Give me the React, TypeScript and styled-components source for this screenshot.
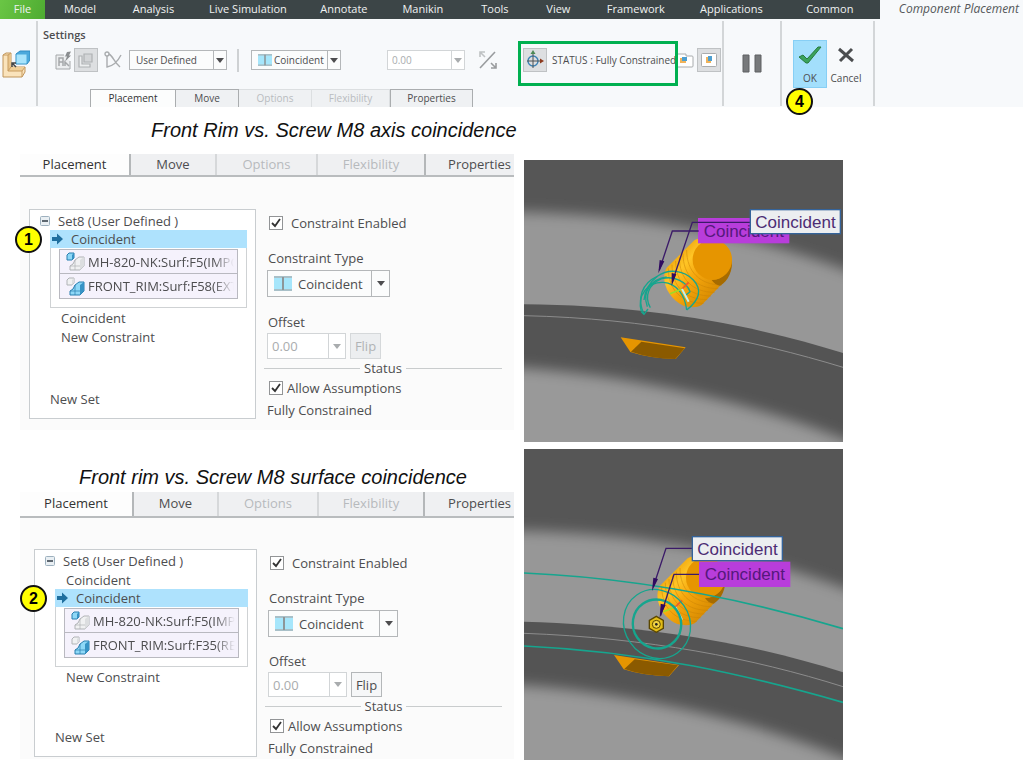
import React, { useId } from "react";
import styled, { createGlobalStyle, css } from "styled-components";

const ui = `"Open Sans", "Noto Sans", sans-serif`;
const arial = `"Liberation Sans", Arial, sans-serif`;

const GlobalStyle = createGlobalStyle`
  *, *::before, *::after { box-sizing: border-box; }
  body { margin: 0; background: #fff; font-family: ${ui}; color: #4d4d4f; }
  button, input, select { font: inherit; color: inherit; margin: 0; }
  button { padding: 0; border: 0; background: none; }
`;

/* ---------- menu bar ---------- */

const MenuBar = styled.nav`
  display: flex;
  height: 19px;
  background: #f7f9fb;
  font-size: 11px;
  line-height: 18px;
`;

const MenuItems = styled.div`
  display: flex;
  flex: 0 0 86%;
  background: #3c4547;
`;

const MenuLink = styled.a<{ $grow: number; $file?: boolean }>`
  flex: ${(p) => p.$grow} 1 0;
  text-align: center;
  white-space: nowrap;
  text-decoration: none;
  color: #f0f2f2;
  ${(p) => p.$file && css`background: linear-gradient(110deg, #6ac645, #4eab31);`}
`;

const ContextTitle = styled.div`
  flex: 1;
  text-align: right;
  padding-right: 4px;
  font-size: 12px;
  font-style: italic;
  white-space: nowrap;
  color: #55585a;
`;

/* ---------- ribbon ---------- */

const Ribbon = styled.header`
  display: flex;
  height: 88px;
  background: #f7f9fb;
  font-size: 10px;
`;

const Group = styled.section<{ $width: number }>`
  flex: 0 0 ${(p) => p.$width}px;
  display: flex;
  align-items: center;
  justify-content: center;
  margin: 2px 0 1px;
  border-right: 2px solid #d3d6d8;
`;

const ComponentGroup = styled(Group)`
  justify-content: flex-start;
  padding-left: 2px;
`;

const SettingsGroup = styled(Group)`
  flex-direction: column;
  align-items: stretch;
  justify-content: flex-start;
`;

const GroupTitle = styled.h2`
  margin: 4px 0 0 5px;
  font-size: 11px;
  line-height: 20px;
  font-weight: 600;
`;

const ControlRow = styled.div`
  display: flex;
  align-items: center;
  height: 30px;
  padding-left: 15px;
`;

const ToolButton = styled.button<{ $pressed?: boolean; $gap?: number; $width?: number }>`
  display: grid;
  place-items: center;
  flex: none;
  width: ${(p) => p.$width ?? 24}px;
  height: 24px;
  margin-left: ${(p) => p.$gap ?? 0}px;
  ${(p) =>
    p.$pressed &&
    css`
      border: 1px solid #bfc2c4;
      background: #dddfe1;
    `}
`;

const Rule = styled.span`
  width: 2px;
  height: 23px;
  margin: 0 12px 0 10px;
  background: #ced1d3;
`;

const Spacer = styled.span<{ $width: number }>`
  flex: 0 0 ${(p) => p.$width}px;
`;

const StatusArea = styled.div`
  position: relative;
  display: flex;
  align-items: center;
  flex: none;
  width: 155px;
  margin-left: 23px;
`;

const StatusText = styled.span`
  margin-left: 5px;
  white-space: nowrap;
`;

const Highlight = styled.span`
  position: absolute;
  z-index: 1;
  inset: -7px 0 -14px -5px;
  border: 3px solid #00b050;
  pointer-events: none;
`;

const RibbonTabs = styled.div`
  display: flex;
  margin: 14px 0 -1px 52px;
  height: 18px;
`;

const RibbonTab = styled.button<{ $width: number; $active?: boolean }>`
  flex: 0 0 ${(p) => p.$width}px;
  line-height: 17px;
  border: 1px solid #dcdfe1;
  border-width: 1px 1px 0 0;
  background: #eff1f3;
  &:disabled { color: #b9bcbf; }
  &:enabled { border-color: #aaadaf; }
  &:first-child, &:last-child { border-left: 1px solid #aaadaf; }
  ${(p) => p.$active && css`background: #fcfdfd; color: #333;`}
`;

const Actions = styled(Group)`
  justify-content: flex-start;
  align-items: flex-start;
  padding: 19px 0 0 11px;
`;

const ActionButton = styled.button<{ $primary?: boolean }>`
  display: grid;
  justify-items: center;
  grid-template-rows: 28px 18px;
  align-items: center;
  width: 34px;
  margin-right: 2px;
  border: 1px solid transparent;
  ${(p) => p.$primary && css`background: #a3dffc; border-color: #87cff5;`}
`;

const ActionSlot = styled.div`
  position: relative;
`;

const Badge = styled.span<{ $left: number; $top: number }>`
  position: absolute;
  z-index: 2;
  left: ${(p) => p.$left}px;
  top: ${(p) => p.$top}px;
  width: 27px;
  height: 27px;
  border: 2px solid #111;
  border-radius: 50%;
  background: #ffff00;
  color: #000;
  font: bold 16px/23px ${arial};
  text-align: center;
`;

/* ---------- combo boxes ---------- */

const Combo = styled.span<{ $width: number; $height: number; $arrow: number; $off?: boolean; $plain?: boolean }>`
  display: grid;
  grid-template-columns: minmax(0, 1fr) ${(p) => p.$arrow}px;
  flex: none;
  width: ${(p) => p.$width}px;
  height: ${(p) => p.$height}px;
  border: 1px solid ${(p) => (p.$off ? "#d2d5d7" : "#b4b7b9")};
  background: ${(p) => (p.$plain ? "#fff" : "#fbfcfc")};
  color: ${(p) => (p.$off ? "#a9acae" : "inherit")};
`;

const comboField = css`
  grid-area: 1 / 1;
  min-width: 0;
  width: 100%;
  border: 0;
  border-radius: 0;
  outline: 0;
  background: transparent;
  appearance: none;
  opacity: 1;
`;

const ComboSelect = styled.select<{ $indent: number }>`
  ${comboField}
  grid-column: 1 / 3;
  padding: 0 0 0 ${(p) => p.$indent}px;
`;

const ComboInput = styled.input`
  ${comboField}
  padding: 0 0 0 4px;
`;

const ComboIcon = styled.span`
  grid-area: 1 / 1;
  align-self: center;
  display: flex;
  padding-left: 6px;
  pointer-events: none;
`;

const ComboArrow = styled.span<{ $off?: boolean }>`
  grid-area: 1 / 2;
  display: grid;
  place-items: center;
  border-left: 1px solid ${(p) => (p.$off ? "#d2d5d7" : "#b4b7b9")};
  color: ${(p) => (p.$off ? "#a9acae" : "#4d4d4f")};
  pointer-events: none;
`;

/* ---------- page body ---------- */

const Content = styled.main`
  display: grid;
  grid-template-columns: minmax(0, 494px) minmax(0, 319px);
  column-gap: 10px;
  align-items: start;
  padding-left: 20px;
`;

const Caption = styled.h1<{ $left: number; $top: number; $bottom: number }>`
  margin: 0;
  padding: ${(p) => p.$top}px 0 ${(p) => p.$bottom}px ${(p) => p.$left}px;
  font: italic 20px/30px ${arial};
  color: #111;
  white-space: nowrap;
`;

const Panel = styled.section`
  background: #fbfbfb;
  font-size: 13px;
`;

const PanelTabs = styled.div<{ $columns: string; $height: number }>`
  display: grid;
  grid-template-columns: ${(p) => p.$columns};
  height: ${(p) => p.$height}px;
  border-bottom: 2px solid #b9bcbe;
  background: #eff0f2;
`;

const PanelTab = styled.button<{ $active?: boolean }>`
  line-height: 18px;
  padding-bottom: 2px;
  white-space: nowrap;
  border-right: 2px solid #d6d8da;
  &:disabled { color: #b7babd; }
  &:nth-child(1), &:nth-child(4) { border-color: #b4b7b9; }
  &:last-child { border-right: 0; text-align: right; padding-right: 3px; }
  ${(p) => p.$active && css`background: #fdfdfd; color: #333;`}
`;

const PanelBody = styled.div<{ $top: number; $left: number; $list: number; $gap: number; $bottom: number }>`
  display: grid;
  grid-template-columns: ${(p) => p.$list}px minmax(0, 1fr);
  column-gap: ${(p) => p.$gap}px;
  padding: ${(p) => p.$top}px 12px ${(p) => p.$bottom}px ${(p) => p.$left}px;
`;

const Tree = styled.div<{ $height: number }>`
  display: flex;
  flex-direction: column;
  height: ${(p) => p.$height}px;
  padding: 1px 8px 10px 20px;
  border: 1px solid #c9cdd0;
  background: #fff;
`;

const SetRow = styled.div`
  display: flex;
  align-items: center;
  gap: 8px;
  height: 19px;
  margin-left: -10px;
`;

const Toggle = styled.button`
  display: flex;
`;

const TreeRow = styled.button<{ $indent: number }>`
  display: block;
  flex: none;
  height: 19px;
  padding-left: ${(p) => p.$indent}px;
  line-height: 18px;
  text-align: left;
`;

const SelectedRow = styled.div`
  position: relative;
  display: flex;
  flex: none;
  height: 18px;
  background: #aee2fd;
`;

const SelectedButton = styled.button`
  display: flex;
  flex: 1;
  align-items: center;
  gap: 8px;
  padding-left: 2px;
  line-height: 18px;
`;

const References = styled.div`
  flex: none;
  height: 60px;
  padding: 1px 8px;
  border: 1px solid #cfd2d4;
  border-top: 0;
`;

const Reference = styled.button`
  display: flex;
  align-items: center;
  width: 100%;
  height: 25px;
  gap: 3px;
  padding: 0 3px 0 6px;
  border: 1px solid #b9b9c0;
  & + & { border-top: 0; }
  background: #f5f2fc;
`;

const ReferenceText = styled.span`
  flex: 1;
  overflow: hidden;
  white-space: nowrap;
  text-align: left;
  mask-image: linear-gradient(to right, #000 86%, transparent 100%);
`;

const NewSet = styled(TreeRow)`
  margin-top: auto;
`;

const Form = styled.form`
  display: flex;
  flex-direction: column;
  align-items: flex-start;
`;

const CheckLabel = styled.label<{ $height: number; $gap: number }>`
  display: flex;
  align-items: center;
  gap: ${(p) => p.$gap}px;
  height: ${(p) => p.$height}px;
  padding-left: 3px;
  white-space: nowrap;
`;

const CheckBox = styled.span`
  display: grid;
  width: 14px;
  height: 14px;
  svg { grid-area: 1 / 1; place-self: center; pointer-events: none; display: none; }
  input:checked + svg { display: block; }
`;

const CheckInput = styled.input`
  grid-area: 1 / 1;
  width: 14px;
  height: 14px;
  appearance: none;
  border: 1px solid #929496;
  background: #fff;
`;

const FieldLabel = styled.label<{ $top: number; $bottom: number }>`
  margin: ${(p) => p.$top}px 0 ${(p) => p.$bottom}px 2px;
  line-height: 20px;
`;

const FieldRow = styled.div`
  display: flex;
  gap: 4px;
  margin-left: 1px;
`;

const FlipButton = styled.button`
  width: 31px;
  border: 1px solid #b4b7b9;
  background: #f6f7f8;
  &:disabled { color: #b0b3b5; border-color: #d5d8da; background: #eceef0; }
`;

const StatusRule = styled.div`
  display: flex;
  align-items: center;
  align-self: stretch;
  gap: 4px;
  height: 18px;
  margin-left: -2px;
  line-height: 18px;
  &::before, &::after { content: ""; flex: 1; height: 1px; background: #c9cccd; }
`;

const StatusResult = styled.output`
  padding-left: 1px;
  line-height: 20px;
  margin-top: 1px;
`;

const Figures = styled.div`
  display: grid;
  gap: 7px;
  padding-top: 53px;
`;

const Drawing = styled.svg`
  display: block;
  width: 100%;
  height: auto;
  text { font: 51px ${arial}; }
`;

/* ---------- icons ---------- */

const Caret = () => (
  <svg width="8" height="5" viewBox="0 0 8 5"><path d="M0 0h8L4 5z" fill="currentColor" /></svg>
);

const CoincidentIcon = ({ width }: { width: number }) => (
  <svg width={width} height={width === 14 ? 12 : 15} viewBox="0 0 18 15" preserveAspectRatio="none">
    <rect width="18" height="15" fill="#a6e6fb" />
    <path d="M0 1h18M0 14h18" stroke="#a9b4b8" strokeWidth="1.5" />
    <path d="M9 1v13" stroke="#8d9699" strokeWidth="2" />
  </svg>
);

const AssemblyIcon = () => (
  <svg width="28" height="28" viewBox="0 0 28 28">
    <path d="M1 5l3-2h5v14h14v5l-3 5H1z" fill="#fae3bb" stroke="#c0955a" />
    <path d="M9 3v15l-3 3V5z" fill="#e9c48b" />
    <path d="M6 21l3-4h14l-3 4z" fill="#f0cf98" />
    <path d="M1 5h5l3-2M6 5v16h14l3-4M20 21v6M6 21l3-4" fill="none" stroke="#c79c60" />
    <path d="M14 4l4-3h10v9l-3 4H14z" fill="#4ba9dc" stroke="#2f8cc2" />
    <path d="M14.500 4.500h10v9h-10z" fill="#a9e4fb" />
    <path d="M10 13l4 4M10 17v-4h4" stroke="#444" strokeWidth="1.5" fill="none" />
  </svg>
);

const ConvertIcon = () => (
  <svg width="17" height="19" viewBox="0 0 17 19" fill="none" stroke="#a5a8aa">
    <path d="M9 4H1v14h14v-8" fill="#eceeef" />
    <path d="M4 15V7h4v8M8 11H4M10 15v-4l4 4" strokeWidth="1.5" />
    <path d="M12 1l4-.5-2 4h2l-6 6 2-5h-2z" fill="#8b8e90" stroke="none" />
  </svg>
);

const ManualIcon = () => (
  <svg width="16" height="16" viewBox="0 0 16 16" fill="none" stroke="#aeb1b3" strokeWidth="1.2">
    <path d="M1 4h3v8h8v3H1z" fill="#eceeef" />
    <path d="M6 2h8v8H6z" fill="#d3d5d7" />
  </svg>
);

const CurveIcon = () => (
  <svg width="18" height="18" viewBox="0 0 18 18" fill="none" stroke="#a9acae" strokeWidth="1.4">
    <path d="M3 4v12C9 15 14 10 17 4M5 3c4 2 5 8 11 13" />
    <circle cx="3" cy="3" r="2" fill="#f7f9fb" />
  </svg>
);

const FlipIcon = () => (
  <svg width="18" height="18" viewBox="0 0 18 18" fill="none" stroke="#999c9e" strokeWidth="1.6">
    <path d="M1 17L16 1" />
    <path d="M1 6V1h5M1 1l5 5" stroke="#bfc2c4" />
    <path d="M17 12v5h-5M17 17l-5-5" />
  </svg>
);

const DraggerIcon = () => (
  <svg width="20" height="20" viewBox="0 0 20 20" fill="none">
    <circle cx="8" cy="11" r="5" stroke="#3d83b5" strokeWidth="1.4" />
    <path d="M8 3v15M2 11h14" stroke="#4c5052" />
    <path d="M8 0l2.500 4h-5z" fill="#4d8a56" />
    <path d="M19 11l-4-2.500v5z" fill="#8c3a1d" />
  </svg>
);

const SubWindowIcon = () => (
  <svg width="16" height="15" viewBox="0 0 16 15">
    <path d="M0 1h8v2h6q1 0 1 1v9q0 1-1 1H0" fill="#fff" stroke="#a9acae" />
    <path d="M2 5h6v5H2z" fill="#f0b35a" /><path d="M4 4h5v4H4z" fill="#4d9fd0" />
  </svg>
);

const GraphicWindowIcon = () => (
  <svg width="16" height="14" viewBox="0 0 16 14">
    <rect x=".5" y=".5" width="15" height="13" rx="1" fill="#fff" stroke="#a9acae" />
    <path d="M5 4h5v6H5z" fill="#f0b35a" /><path d="M7 3h4v5H7z" fill="#4d9fd0" />
  </svg>
);

const PauseIcon = () => (
  <svg width="20" height="19" viewBox="0 0 20 19">
    <path d="M1 1h6v17H1zM13 1h6v17h-6z" fill="#77797b" stroke="#5e6062" />
  </svg>
);

const OkIcon = () => (
  <svg width="24" height="18" viewBox="0 0 24 18">
    <path d="M1 11l4-2 4 4L20 1h3L10 17H8z" fill="#3aa35c" stroke="#267a3e" />
  </svg>
);

const CancelIcon = () => (
  <svg width="18" height="16" viewBox="0 0 18 16">
    <path d="M2 2l14 12M15 2L3 14" stroke="#4b4d4f" strokeWidth="3" />
  </svg>
);

const CollapseIcon = () => (
  <svg width="10" height="10" viewBox="0 0 10 10">
    <rect x=".5" y=".5" width="9" height="9" rx="1" fill="#e9eff3" stroke="#9db0be" />
    <path d="M2 5h6" stroke="#2e3a44" strokeWidth="1.500" />
  </svg>
);

const ArrowIcon = () => (
  <svg width="11" height="12" viewBox="0 0 11 12">
    <path d="M0 4h5V0.500L11 6l-6 5.500V8H0z" fill="#1f6f9f" />
  </svg>
);

const TickIcon = () => (
  <svg width="10" height="10" viewBox="0 0 10 10">
    <path d="M1 5l3 3 5-7" fill="none" stroke="#333" strokeWidth="1.800" />
  </svg>
);

const SurfaceIcon = ({ flipped }: { flipped?: boolean }) => {
  const blue = { fill: "#8ed8f7", stroke: "#287eaf", side: "#3693c5" };
  const grey = { fill: "#f0f1f2", stroke: "#b0b3b6", side: "#dcdee0" };
  const small = flipped ? grey : blue;
  const large = flipped ? blue : grey;
  return (
    <svg width="19" height="19" viewBox="0 0 19 19">
      <path d="M1 3l2-2h5v5L6 8H1z" fill={small.fill} stroke={small.stroke} />
      <path d="M6 3l2-2v5L6 8z" fill={small.side} />
      <path d="M4 18v-4l3-2 2-4 4-3h5v9l-4 4z" fill={large.fill} stroke={large.stroke} />
      <path d="M14 8l4-3v9l-4 4z" fill={large.side} />
      <path d="M4 14h10M9 8v10" fill="none" stroke={large.stroke} strokeWidth=".7" />
    </svg>
  );
};

/* ---------- form parts ---------- */

function ConstraintSelect(p: { id: string; width: number; height: number; arrow: number; icon: number; indent: number }) {
  return (
    <Combo $width={p.width} $height={p.height} $arrow={p.arrow}>
      <ComboIcon><CoincidentIcon width={p.icon} /></ComboIcon>
      <ComboSelect id={p.id} $indent={p.indent} aria-label="Constraint Type">
        <option>Coincident</option>
      </ComboSelect>
      <ComboArrow><Caret /></ComboArrow>
    </Combo>
  );
}

function OffsetCombo(p: { id: string; width: number; height: number; arrow: number }) {
  return (
    <Combo $width={p.width} $height={p.height} $arrow={p.arrow} $off $plain>
      <ComboInput id={p.id} aria-label="Offset" defaultValue="0.00" disabled />
      <ComboArrow $off><Caret /></ComboArrow>
    </Combo>
  );
}

function Check(p: { label: string; height: number; gap: number }) {
  return (
    <CheckLabel $height={p.height} $gap={p.gap}>
      <CheckBox><CheckInput type="checkbox" defaultChecked /><TickIcon /></CheckBox>
      {p.label}
    </CheckLabel>
  );
}

type PlacementProps = {
  step: number;
  columns: string;
  tabHeight: number;
  body: { $top: number; $left: number; $list: number; $gap: number; $bottom: number };
  treeHeight: number;
  before?: string[];
  after: string[];
  references: string[];
  typeWidth: number;
  flip?: boolean;
};

function PlacementPanel(p: PlacementProps) {
  const id = useId();
  return (
    <Panel>
      <PanelTabs $columns={p.columns} $height={p.tabHeight}>
        <PanelTab $active>Placement</PanelTab>
        <PanelTab>Move</PanelTab>
        <PanelTab disabled>Options</PanelTab>
        <PanelTab disabled>Flexibility</PanelTab>
        <PanelTab>Properties</PanelTab>
      </PanelTabs>
      <PanelBody {...p.body}>
        <Tree $height={p.treeHeight}>
          <SetRow><Toggle aria-label="Collapse"><CollapseIcon /></Toggle>Set8 (User Defined )</SetRow>
          {p.before?.map((t) => <TreeRow key={t} $indent={11}>{t}</TreeRow>)}
          <SelectedRow>
            <Badge $left={-35} $top={-4}>{p.step}</Badge>
            <SelectedButton><ArrowIcon />Coincident</SelectedButton>
          </SelectedRow>
          <References>
            {p.references.map((t, i) => (
              <Reference key={t}><SurfaceIcon flipped={i === 1} /><ReferenceText>{t}</ReferenceText></Reference>
            ))}
          </References>
          {p.after.map((t) => <TreeRow key={t} $indent={11}>{t}</TreeRow>)}
          <NewSet $indent={0}>New Set</NewSet>
        </Tree>
        <Form>
          <Check label="Constraint Enabled" height={28} gap={8} />
          <FieldLabel htmlFor={`${id}type`} $top={11} $bottom={2}>Constraint Type</FieldLabel>
          <FieldRow>
            <ConstraintSelect id={`${id}type`} width={p.typeWidth} height={27} arrow={18} icon={18} indent={30} />
          </FieldRow>
          <FieldLabel htmlFor={`${id}offset`} $top={p.flip ? 14 : 15} $bottom={1}>Offset</FieldLabel>
          <FieldRow>
            <OffsetCombo id={`${id}offset`} width={79} height={p.flip ? 25 : 26} arrow={17} />
            <FlipButton type="button" disabled={!p.flip}>Flip</FlipButton>
          </FieldRow>
          <StatusRule>Status</StatusRule>
          <Check label="Allow Assumptions" height={22} gap={4} />
          <StatusResult>Fully Constrained</StatusResult>
        </Form>
      </PanelBody>
    </Panel>
  );
}

/* ---------- 3D view drawings ---------- */

const Defs = ({ id }: { id: string }) => (
  <defs>
    <filter id={`${id}soft`} x="-10%" y="-30%" width="120%" height="160%"><feGaussianBlur stdDeviation="19" /></filter>
    <linearGradient id={`${id}body`} gradientUnits="userSpaceOnUse" x1="440" y1="300" x2="580" y2="430">
      <stop offset="0" stopColor="#e89a05" /><stop offset=".3" stopColor="#ffc526" />
      <stop offset=".55" stopColor="#f5a60d" /><stop offset="1" stopColor="#d68a00" />
    </linearGradient>
  </defs>
);

const Screw = ({ id }: { id: string }) => (
  <g>
    <path d="M523 256L440 338C420 370 440 430 492 453C515 458 530 458 545 450L620 372C645 335 640 285 605 262C580 245 540 245 523 256Z" fill={`url(#${id}body)`} />
    <g fill="none" stroke="#c98206" strokeWidth="3" opacity=".5">
      <path d="M500 285C500 350 540 390 606 390" /><path d="M489 296C489 361 529 401 595 401" />
      <path d="M478 307C478 372 518 412 584 412" /><path d="M467 318C467 383 507 423 573 423" />
      <path d="M456 329C456 394 496 434 562 434" /><path d="M445 340C445 405 485 445 551 445" />
    </g>
    <path d="M575 375C610 374 636 348 635 310C640 345 625 380 600 392Q585 390 575 375Z" fill="#a66b00" />
    <ellipse cx="577" cy="314" rx="59" ry="60" fill="#e69500" />
  </g>
);

const Axes = () => (
  <g fill="none" strokeWidth="5">
    <path d="M450 416l36-14" stroke="#9bdc28" /><path d="M486 402l20-20" stroke="#f0582c" />
    <path d="M486 402l20 38" stroke="#c3f0ee" strokeWidth="6" />
  </g>
);

const Tag = ({ x, y, active }: { x: number; y: number; active?: boolean }) => (
  <g>
    <rect x={x} y={y} width="270" height="72" fill={active ? "#eceef0" : "#b83ddb"} stroke={active ? "#34639a" : "#b83ddb"} strokeWidth="4" />
    <text x={x + 15} y={y + 54} fill={active ? "#4d2c74" : "#55187c"}>Coincident</text>
  </g>
);

function AxisView() {
  const id = useId();
  return (
    <Drawing viewBox="12 15 957 846" role="img" aria-label="Axis coincidence view">
      <Defs id={id} />
      <rect x="12" y="15" width="957" height="846" fill="#565656" />
      <path d="M-90 170C300 170 700 226 1060 378V700H-90Z" fill="#979797" filter={`url(#${id}soft)`} />
      <path d="M12 448C380 450 700 510 969 594V861H12Z" fill="#545454" />
      <path d="M-90 632C300 650 720 740 1060 890V1000H-90Z" fill="#999" filter={`url(#${id}soft)`} />
      <path d="M12 482C380 490 700 555 969 637" fill="none" stroke="#8c8c8c" strokeWidth="3" />
      <path d="M302 547L497 577L467 612Q390 610 331 591Z" fill="#e69500" />
      <path d="M364 560L494 580L466 612Q390 610 333 590Z" fill="#8b5a00" />
      <Screw id={id} />
      <g fill="none" stroke="#16a58e" strokeWidth="4">
        <path d="M372 478C350 430 365 385 412 364C445 340 490 345 520 375C548 405 538 435 500 465" />
        <path d="M391 458C372 425 385 388 425 371C460 362 500 378 510 410L498 420" />
        <path d="M364 470C350 420 385 380 430 382C470 385 495 420 500 465" />
        <path d="M382 455C365 410 395 372 440 366M364 470L372 478L384 462M372 435C375 400 392 380 412 364" />
      </g>
      <Axes />
      <Tag x={536} y={191} />
      <g fill="none" stroke="#3b1a68" strokeWidth="4">
        <path d="M536 228H457L418 345" /><path d="M691 202H517L457 380" />
      </g>
      <path d="M419 315l14 4-18 36zM455 354l14 4-14 34z" fill="#2f0a60" />
      <Tag x={691} y={164} active />
    </Drawing>
  );
}

function SurfaceView() {
  const id = useId();
  return (
    <Drawing viewBox="12 12 957 933" role="img" aria-label="Surface coincidence view">
      <Defs id={id} />
      <rect x="12" y="12" width="957" height="933" fill="#565656" />
      <path d="M-90 256C300 256 700 311 1060 465V790H-90Z" fill="#979797" filter={`url(#${id}soft)`} />
      <path d="M12 530C380 540 700 595 969 682V945H12Z" fill="#545454" />
      <path d="M-90 715C300 732 720 825 1060 975V1100H-90Z" fill="#999" filter={`url(#${id}soft)`} />
      <path d="M12 565C380 578 700 640 969 725" fill="none" stroke="#8c8c8c" strokeWidth="3" />
      <path d="M282 630L477 660L447 694Q370 692 311 673Z" fill="#e69500" />
      <path d="M344 643L474 661L446 694Q370 692 313 672Z" fill="#8b5a00" />
      <g transform="translate(-20 84)"><Screw id={id} /><Axes /></g>
      <g fill="none" stroke="#16a58e" strokeWidth="5">
        <path d="M12 384C380 400 700 470 969 551" />
        <path d="M12 603C380 620 680 690 969 772" />
        <ellipse cx="411" cy="537" rx="72" ry="74" strokeWidth="7" transform="rotate(-35 411 537)" />
        <ellipse cx="411" cy="537" rx="98" ry="106" strokeWidth="4" transform="rotate(-35 411 537)" />
      </g>
      <path d="M409 514l21 12v24l-21 12-21-12v-24z" fill="#e3bd16" stroke="#5b4700" strokeWidth="4" />
      <circle cx="409" cy="538" r="12" fill="#f1d444" stroke="#5b4700" strokeWidth="3" />
      <circle cx="409" cy="538" r="4" fill="#222" />
      <g fill="none" stroke="#3b1a68" strokeWidth="4">
        <path d="M516 310H438L400 425" /><path d="M538 388H462L422 512" />
      </g>
      <path d="M400 398l14 4-18 36zM422 476l15 4-18 38z" fill="#2f0a60" />
      <Tag x={517} y={275} active />
      <Tag x={539} y={352} />
    </Drawing>
  );
}

/* ---------- page ---------- */

const menu: [string, number][] = [
  ["File", 45], ["Model", 70], ["Analysis", 77], ["Live Simulation", 112], ["Annotate", 80], ["Manikin", 78],
  ["Tools", 66], ["View", 61], ["Framework", 94], ["Applications", 97], ["Common", 100],
];

export default function App() {
  return (
    <>
      <GlobalStyle />
      <MenuBar>
        <MenuItems>
          {menu.map(([label, grow], i) => (
            <MenuLink key={label} href="#" $grow={grow} $file={i === 0}>{label}</MenuLink>
          ))}
        </MenuItems>
        <ContextTitle>Component Placement</ContextTitle>
      </MenuBar>
      <Ribbon>
        <ComponentGroup $width={38}><AssemblyIcon /></ComponentGroup>
        <SettingsGroup $width={686}>
          <GroupTitle>Settings</GroupTitle>
          <ControlRow>
            <ToolButton $width={20} aria-label="Convert"><ConvertIcon /></ToolButton>
            <ToolButton $pressed $gap={1} aria-label="Manual"><ManualIcon /></ToolButton>
            <ToolButton $width={20} $gap={5} aria-label="Curve"><CurveIcon /></ToolButton>
            <Spacer $width={6} />
            <Combo $width={98} $height={20} $arrow={13}>
              <ComboSelect $indent={6} aria-label="Connection type"><option>User Defined</option></ComboSelect>
              <ComboArrow><Caret /></ComboArrow>
            </Combo>
            <Rule />
            <ConstraintSelect id="ribbon-type" width={90} height={20} arrow={13} icon={14} indent={22} />
            <Spacer $width={46} />
            <OffsetCombo id="ribbon-offset" width={78} height={20} arrow={13} />
            <ToolButton $gap={11} aria-label="Flip"><FlipIcon /></ToolButton>
            <StatusArea>
              <ToolButton $pressed aria-label="3D dragger"><DraggerIcon /></ToolButton>
              <StatusText>STATUS : Fully Constrained</StatusText>
              <Highlight />
            </StatusArea>
            <ToolButton $width={16} aria-label="Separate window"><SubWindowIcon /></ToolButton>
            <ToolButton $pressed $gap={3} aria-label="Graphics window"><GraphicWindowIcon /></ToolButton>
          </ControlRow>
          <RibbonTabs>
            <RibbonTab $width={86} $active>Placement</RibbonTab>
            <RibbonTab $width={63}>Move</RibbonTab>
            <RibbonTab $width={73} disabled>Options</RibbonTab>
            <RibbonTab $width={78} disabled>Flexibility</RibbonTab>
            <RibbonTab $width={83}>Properties</RibbonTab>
          </RibbonTabs>
        </SettingsGroup>
        <Group $width={58}><ToolButton aria-label="Pause"><PauseIcon /></ToolButton></Group>
        <Actions $width={93}>
          <ActionSlot>
            <ActionButton $primary><OkIcon />OK</ActionButton>
            <Badge $left={-7} $top={48}>4</Badge>
          </ActionSlot>
          <ActionButton><CancelIcon />Cancel</ActionButton>
        </Actions>
      </Ribbon>
      <Content>
        <div>
          <Caption $left={131} $top={8} $bottom={9}>Front Rim vs. Screw M8 axis coincidence</Caption>
          <PlacementPanel
            step={1}
            columns="111px 86px 101px 108px minmax(0, 1fr)"
            tabHeight={23}
            body={{ $top: 32, $left: 9, $list: 227, $gap: 10, $bottom: 10 }}
            treeHeight={210}
            after={["Coincident", "New Constraint"]}
            references={["MH-820-NK:Surf:F5(IMPORT)", "FRONT_RIM:Surf:F58(EXTRUDE)"]}
            typeWidth={123}
          />
          <Caption $left={59} $top={32} $bottom={0}>Front rim vs. Screw M8 surface coincidence</Caption>
          <PlacementPanel
            step={2}
            columns="114px 85px 100px 106px minmax(0, 1fr)"
            tabHeight={26}
            body={{ $top: 31, $left: 14, $list: 223, $gap: 10, $bottom: 1 }}
            treeHeight={208}
            before={["Coincident"]}
            after={["New Constraint"]}
            references={["MH-820-NK:Surf:F5(IMPORT)", "FRONT_RIM:Surf:F35(REVOLVE)"]}
            typeWidth={130}
            flip
          />
        </div>
        <Figures>
          <AxisView />
          <SurfaceView />
        </Figures>
      </Content>
    </>
  );
}
